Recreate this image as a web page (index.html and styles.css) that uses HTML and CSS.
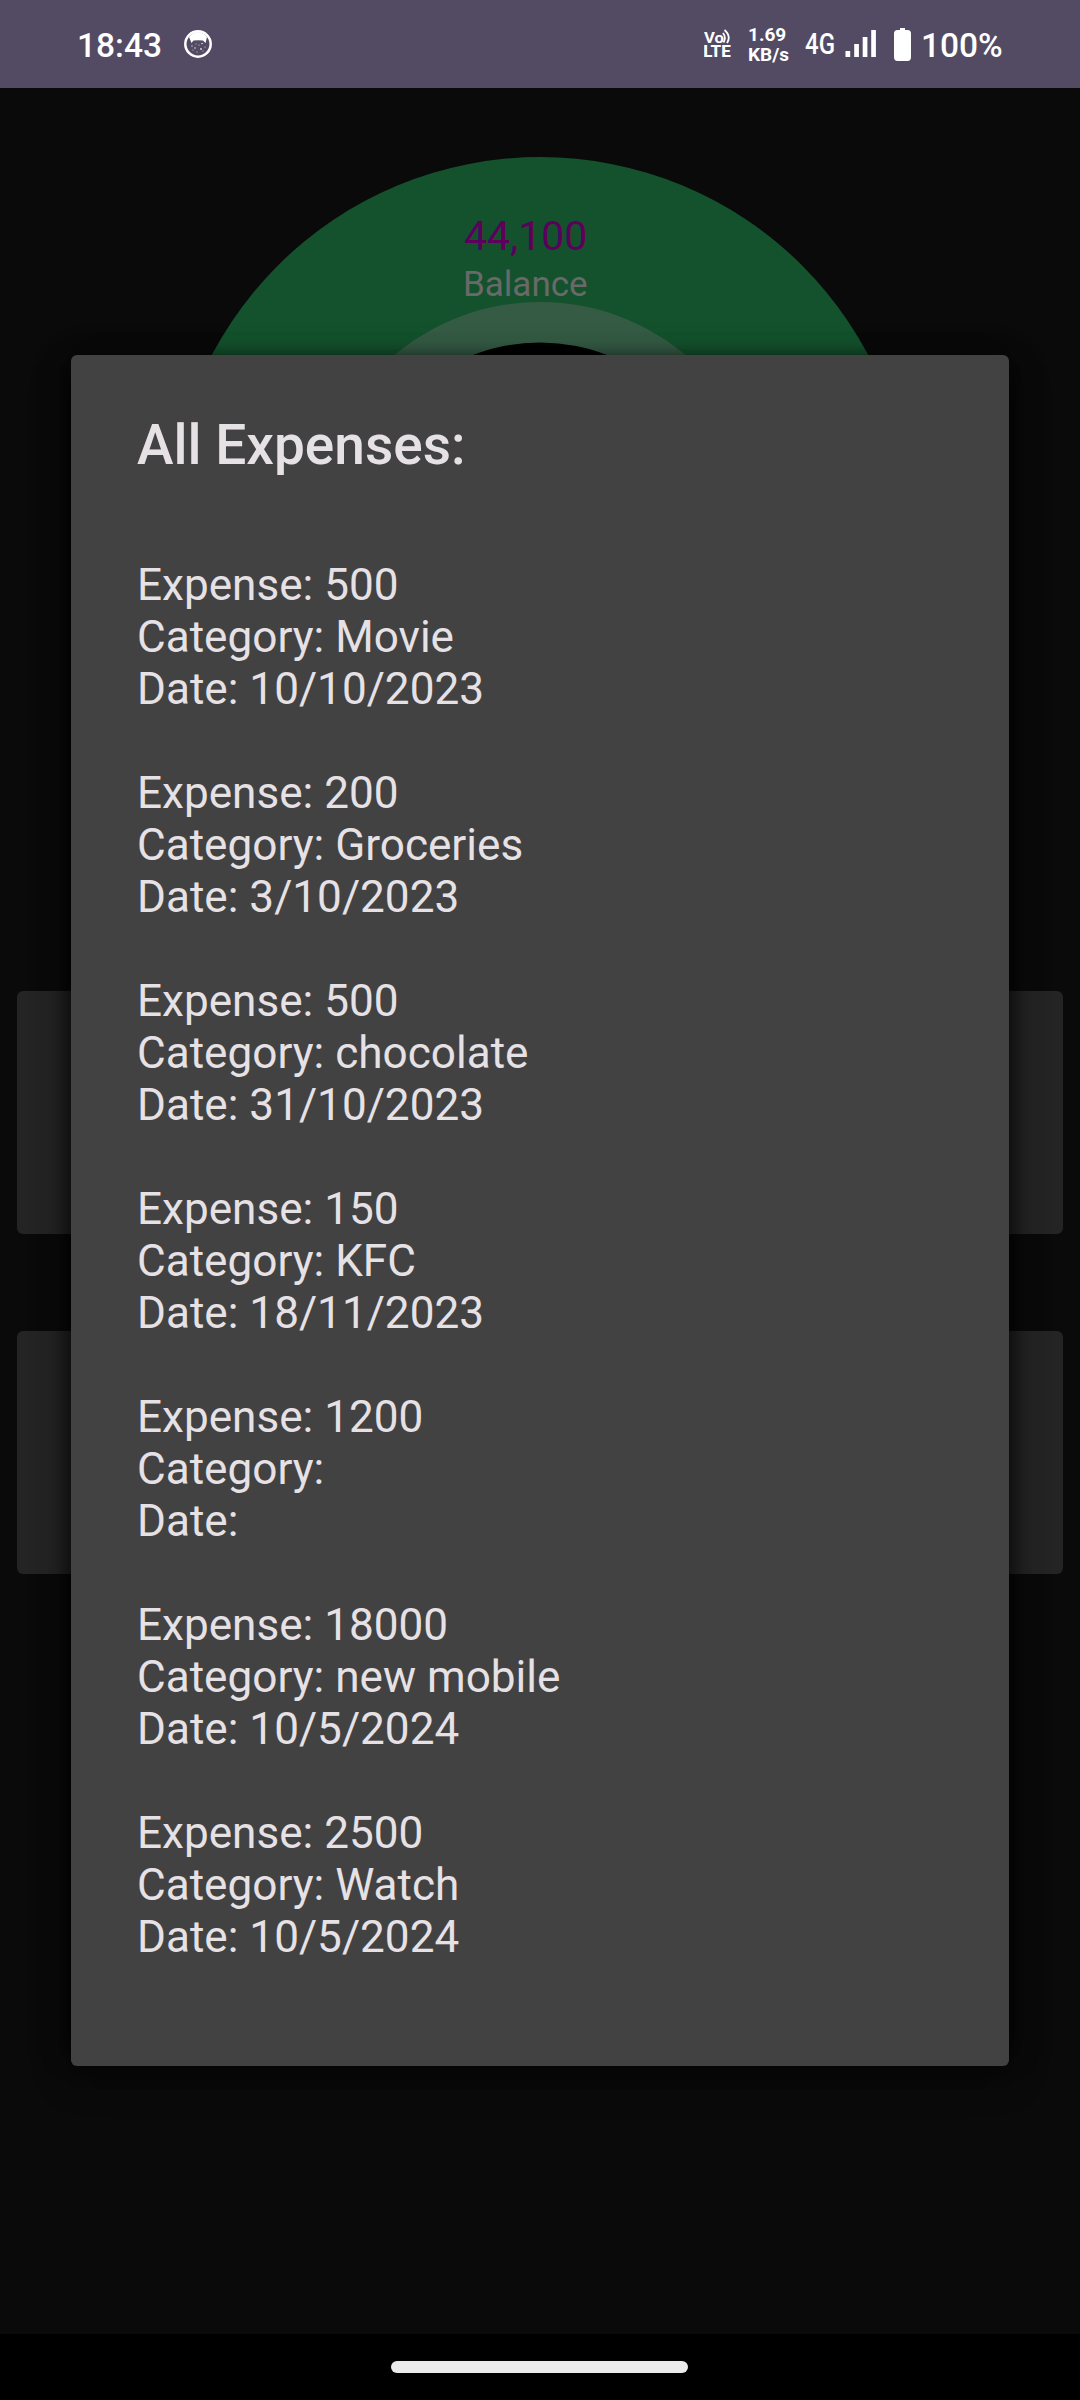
FILE: index.html
```html
<!DOCTYPE html>
<html lang="en">
<head>
<meta charset="utf-8">
<title>All Expenses</title>
<link rel="stylesheet" href="styles.css">
</head>
<body>
<div class="screen">
  <header class="status">
    <span class="clock">18:43</span>
    <svg class="face" width="28" height="28" viewBox="0 0 28 28">
      <circle cx="14" cy="14" r="12.700" fill="none" stroke="#fff" stroke-width="2.500"/>
      <path d="M5 7Q9 2 14 2T23 7L21.500 13L19 10.500Q14 10.200 9.500 10.500L7.500 13Z" fill="#fff"/>
      <g fill="#fff" opacity=".8"><circle cx="8" cy="16" r=".7"/><circle cx="11" cy="18" r=".8"/><circle cx="15" cy="15" r=".6"/><circle cx="18" cy="13.500" r=".8"/><circle cx="17" cy="19" r=".9"/><circle cx="21" cy="17" r=".6"/><circle cx="13" cy="22" r=".6"/><circle cx="9" cy="20" r=".5"/><circle cx="19" cy="21" r=".5"/><circle cx="12" cy="14" r=".5"/></g>
    </svg>
    <span class="spacer"></span>
    <svg class="volte" width="28" height="40" viewBox="0 0 28 40">
      <text x="0" y="18.700" class="vo" textLength="20" lengthAdjust="spacingAndGlyphs">Vo</text>
      <path d="M19 9Q22.500 13.500 19.500 18.500M20.500 6Q27.500 12 23 19" fill="none" stroke="#fff" stroke-width="1.800"/>
      <text x="-.8" y="33" class="lte" textLength="27.500" lengthAdjust="spacingAndGlyphs">LTE</text>
    </svg>
    <div class="speed"><span>1.69</span><span>KB/s</span></div>
    <svg class="signal" width="72" height="32" viewBox="0 0 72 32">
      <text x="0" y="25.700" class="net" textLength="30" lengthAdjust="spacingAndGlyphs">4G</text>
      <path d="M40.500 23h4.700v6h-4.700zM49.200 16h4.700v13h-4.700zM57.700 9h4.700v20h-4.700zM66.200 2h4.700v27h-4.700z" fill="#fff"/>
    </svg>
    <svg class="battery" width="17" height="33" viewBox="0 0 17 33">
      <path d="M6 0h5v2h2.500Q17 2 17 5.500V29Q17 33 13.500 33h-10Q0 33 0 29V5.500Q0 2 3.500 2H6Z" fill="#fff"/>
    </svg>
    <span class="percent">100%</span>
  </header>
  <main class="page">
    <div class="chart">
      <svg width="742" height="742" viewBox="0 0 742 742">
        <circle cx="371" cy="371" r="371" fill="#14522d"/>
        <circle cx="371" cy="371" r="226" fill="#355b45"/>
        <circle cx="371" cy="371" r="185.500" fill="#000"/>
      </svg>
      <div class="slice-label"><span class="amount">44,100</span><span class="name">Balance</span></div>
    </div>
    <div class="card"></div>
    <div class="card"></div>
  </main>
  <footer class="nav"><span class="pill"></span></footer>
  <section class="dialog">
    <h1>All Expenses:</h1>
    <ul class="list">
      <li><p>Expense: 500</p><p>Category: Movie</p><p>Date: 10/10/2023</p></li>
      <li><p>Expense: 200</p><p>Category: Groceries</p><p>Date: 3/10/2023</p></li>
      <li><p>Expense: 500</p><p>Category: chocolate</p><p>Date: 31/10/2023</p></li>
      <li><p>Expense: 150</p><p>Category: KFC</p><p>Date: 18/11/2023</p></li>
      <li><p>Expense: 1200</p><p>Category:</p><p>Date:</p></li>
      <li><p>Expense: 18000</p><p>Category: new mobile</p><p>Date: 10/5/2024</p></li>
      <li><p>Expense: 2500</p><p>Category: Watch</p><p>Date: 10/5/2024</p></li>
    </ul>
  </section>
</div>
</body>
</html>
```
FILE: styles.css
```css
* { box-sizing: border-box; margin: 0; padding: 0; }
body { background: #0a0a0a; font-family: Roboto, sans-serif; }
.screen { position: relative; width: 1080px; height: 2400px; overflow: hidden; display: flex; flex-direction: column; }
.status { flex: none; height: 88px; padding: 0 76px 0 77px; background: #534b64; color: #fff; display: flex; align-items: center; }
.clock { width: 107px; font-size: 33.5px; font-weight: 500; line-height: 40px; padding-top: 4px; }
.spacer { flex: 1; }
.volte { margin-right: 16px; }
.vo { font-size: 15.5px; font-weight: 700; fill: #fff; }
.lte { font-size: 16px; font-weight: 800; fill: #fff; }
.speed { display: flex; flex-direction: column; width: 57px; padding-top: 2px; font-size: 19px; line-height: 20px; font-weight: 700; }
.net { font-size: 29px; font-weight: 500; fill: #fff; }
.signal { margin-right: 17px; }
.battery { margin-right: 10px; }
.percent { width: 83px; font-size: 33.5px; font-weight: 500; line-height: 40px; padding-top: 4px; }
.page { flex: 1; display: flex; flex-direction: column; gap: 97px; padding: 69px 17px 0; }
.chart { position: relative; align-self: center; width: 742px; height: 737px; }
.chart svg { display: block; }
.slice-label { position: absolute; left: 295px; top: 55px; display: flex; flex-direction: column; }
.amount { font-size: 41px; line-height: 48px; color: #5c005c; }
.name { margin-left: -1px; font-size: 35px; line-height: 50px; color: #696969; }
.card { flex: none; height: 243px; border-radius: 6px; background: #242424; }
.nav { flex: none; height: 66px; background: #000; display: flex; justify-content: center; padding: 27px 1px 0 0; }
.pill { width: 297px; height: 12px; border-radius: 6px; background: #ebebeb; }
.dialog { position: absolute; left: 71px; top: 355px; width: 938px; height: 1711px; padding: 58px 66px; border-radius: 6px; background: #424242; color: #e6e1e5; box-shadow: 12px 0 22px -10px rgba(0, 0, 0, .75), -12px 0 22px -10px rgba(0, 0, 0, .75), 0 10px 40px rgba(0, 0, 0, .25); }
h1 { font-size: 55px; line-height: 64px; font-weight: 500; }
.list { list-style: none; display: flex; flex-direction: column; gap: 52px; margin-top: 82px; }
.list p { font-size: 44.1px; line-height: 52px; }
```
